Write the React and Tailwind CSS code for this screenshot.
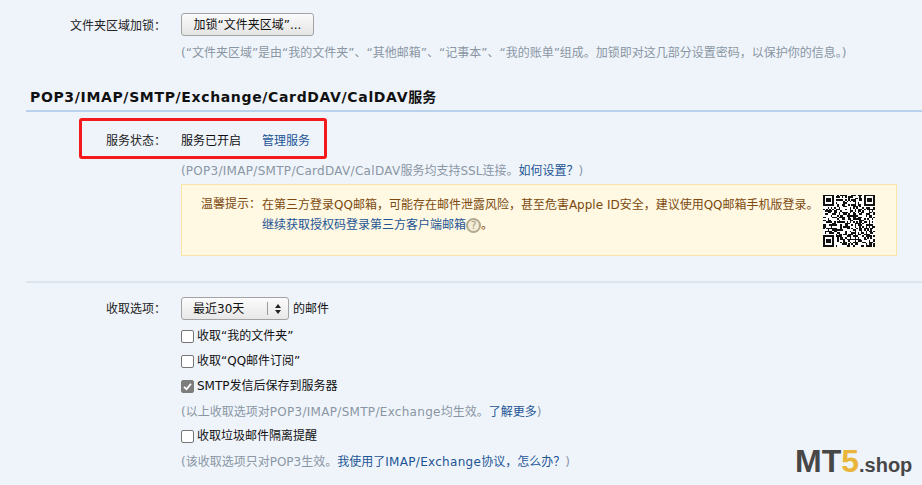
import React from "react";

const fontStack = "font-['DejaVu_Sans','Noto_Sans_CJK_SC',sans-serif]";

// QR modules, seeded so the picture never changes between runs
const QR_SIZE = 33;

const inFinder = (x, y) =>
  (x < 8 && y < 8) || (x >= QR_SIZE - 8 && y < 8) || (x < 8 && y >= QR_SIZE - 8);

const qrModules = () => {
  const cells = [];
  let seed = 7331;
  for (let y = 0; y < QR_SIZE; y++) {
    for (let x = 0; x < QR_SIZE; x++) {
      seed = (seed * 1103515245 + 12345) & 0x7fffffff;
      if (!inFinder(x, y) && (seed >> 16) % 100 < 52) {
        cells.push([x, y]);
      }
    }
  }
  return cells;
};

const Finder = ({ x, y }) => (
  <g>
    <rect x={x} y={y} width="7" height="7" fill="#111" />
    <rect x={x + 1} y={y + 1} width="5" height="5" fill="#fff" />
    <rect x={x + 2} y={y + 2} width="3" height="3" fill="#111" />
  </g>
);

const QrCode = () => (
  <svg viewBox={`0 0 ${QR_SIZE} ${QR_SIZE}`} className="w-[52px] h-[53px] shrink-0" shapeRendering="crispEdges">
    <rect width={QR_SIZE} height={QR_SIZE} fill="#fff" />
    {qrModules().map(([x, y]) => (
      <rect key={`${x}-${y}`} x={x} y={y} width="1" height="1" fill="#111" />
    ))}
    <Finder x={0} y={0} />
    <Finder x={QR_SIZE - 7} y={0} />
    <Finder x={0} y={QR_SIZE - 7} />
  </svg>
);

const Row = ({ label, labelClass = "", className = "", children }) => (
  <div className={`flex ${className}`}>
    <div className={`w-[166px] shrink-0 text-right text-[#222] ${labelClass}`}>{label}</div>
    <div className="ml-[15px] flex-1 min-w-0">{children}</div>
  </div>
);

const Hint = ({ className = "", children }) => (
  <div className={`text-[#8a96a3] h-5 leading-5 whitespace-nowrap ${className}`}>{children}</div>
);

const Link = ({ children }) => <a className="text-[#1d5494]">{children}</a>;

// latin runs sit a little wider in the reference
const Latin = ({ children }) => <span className="tracking-[0.3px]">{children}</span>;

const Check = ({ checked, label, className = "" }) => (
  <div className={`flex items-center h-5 text-[#111] whitespace-nowrap ${className}`}>
    <span
      className={`w-[13px] h-[13px] mr-[3px] rounded-[2px] border flex items-center justify-center shrink-0 ${
        checked ? "bg-[#7d7d7d] border-[#7d7d7d]" : "bg-white border-[#767676]"
      }`}
    >
      {checked && (
        <svg viewBox="0 0 12 12" className="w-[11px] h-[11px]">
          <path d="M2.2 6.4 L4.9 9 L9.8 3" fill="none" stroke="#fff" strokeWidth="2" />
        </svg>
      )}
    </span>
    {label}
  </div>
);

const App = () => {
  return (
    <div className={`relative w-[922px] h-[485px] overflow-hidden bg-[#eff4fb] text-xs leading-5 ${fontStack}`}>
      <Row label="文件夹区域加锁：" labelClass="pt-[3px]" className="pt-[13px] items-center">
        <button className="w-[133px] h-[23px] rounded-[3px] border border-[#a3a3a3] bg-gradient-to-b from-[#fbfbfb] to-[#e4e4e4] text-[#111] text-xs">
          加锁“文件夹区域”...
        </button>
      </Row>
      <div className="pl-[181px] mt-[7px]">
        <Hint>(“文件夹区域”是由“我的文件夹”、“其他邮箱”、“记事本”、“我的账单”组成。加锁即对这几部分设置密码，以保护你的信息。)</Hint>
      </div>

      <div className="ml-[26px] mt-[21px] border-b-2 border-[#b9d1ea] h-[28px] pl-1 text-[14px] font-bold text-[#111] leading-[26px]">
        <span className="tracking-[0.65px]">POP3/IMAP/SMTP/Exchange/CardDAV/CalDAV</span>服务
      </div>

      <Row label="服务状态：" className="mt-[19px] h-5">
        <span className="text-[#111]">服务已开启</span>
        <span className="ml-[21px]">
          <Link>管理服务</Link>
        </span>
      </Row>

      <div className="pl-[181px] mt-[10px]">
        <Hint>
          (<Latin>POP3/IMAP/SMTP/CardDAV/CalDAV</Latin>服务均支持SSL连接。<Link>如何设置？</Link>)
        </Hint>
        <div className="mt-[3px] w-[716px] h-[72px] border border-[#fbe3a8] bg-[#fff8e3] flex pl-[19px] pr-[21px] pt-[9px] text-[#7c4a0e]">
          <span className="shrink-0 leading-[20px]">温馨提示：</span>
          <div className="flex-1 leading-[20px] whitespace-nowrap ml-[1px]">
            <div className="mt-[1px]">在第三方登录QQ邮箱，可能存在邮件泄露风险，甚至危害Apple ID安全，建议使用QQ邮箱手机版登录。</div>
            <div className="flex items-center">
              <Link>继续获取授权码登录第三方客户端邮箱</Link>
              <span className="w-[15px] h-[15px] shrink-0 rounded-full border-2 border-[#b3aa8e] text-[#a0977a] bg-[#f3ecd6] text-[10px] leading-[11px] text-center">?</span>
              <span>。</span>
            </div>
          </div>
          <QrCode />
        </div>
      </div>

      <div className="ml-[26px] mt-[25px] border-t-2 border-[#dde5ef]" />

      <Row label="收取选项：" className="mt-[14px] items-center h-[23px]">
        <div className="flex items-center">
          <div className="w-[108px] h-[23px] rounded-[3px] border border-[#a3a3a3] bg-gradient-to-b from-[#fbfbfb] to-[#e8e8e8] flex items-center text-[#111]">
            <span className="flex-1 pl-[11px]">最近30天</span>
            <span className="w-[21px] h-[13px] border-l border-[#9a9a9a] flex items-center justify-center">
              <svg viewBox="0 0 8 12" className="w-2 h-3">
                <path d="M4 1 L7 5 H1 Z M4 11 L1 7 H7 Z" fill="#222" />
              </svg>
            </span>
          </div>
          <span className="ml-[4px] text-[#111]">的邮件</span>
        </div>
      </Row>

      <div className="pl-[181px] mt-[6px]">
        <Check label="收取“我的文件夹”" />
        <Check label="收取“QQ邮件订阅”" className="mt-[5px]" />
        <Check checked label="SMTP发信后保存到服务器" className="mt-[5px]" />
        <Hint className="mt-[6px]">
          (以上收取选项对<Latin>POP3/IMAP/SMTP/Exchange</Latin>均生效。<Link>了解更多</Link>)
        </Hint>
        <Check label="收取垃圾邮件隔离提醒" className="mt-[4px]" />
        <Hint className="mt-[6px]">
          (该收取选项只对POP3生效。<Link>我使用了<Latin>IMAP/Exchange</Latin>协议，怎么办？</Link>)
        </Hint>
      </div>

      {/* red annotation drawn over the page */}
      <div className="absolute left-[79px] top-[118px] w-[248px] h-[41px] border-[3px] border-[#f5191c] rounded-[3px]" />

      {/* watermark */}
      <div className="absolute left-[795px] top-[445px] flex items-baseline font-['Liberation_Sans',sans-serif] font-bold leading-none text-[#474747]">
        <span className="text-[32px]">MT</span>
        <span className="text-[32px] text-[#e9b53a]">5</span>
        <span className="text-[20px]">.shop</span>
      </div>
    </div>
  );
};

export default App;
